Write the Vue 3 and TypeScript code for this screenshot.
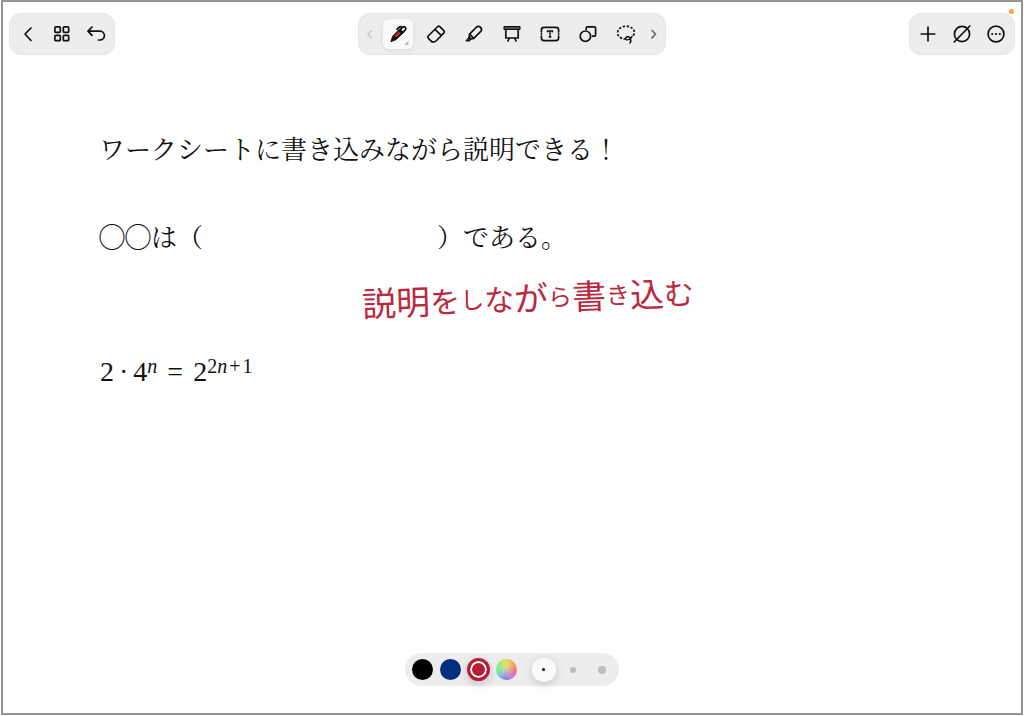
<script setup lang="ts">
import { ref } from 'vue'

interface Ink {
  char: string
  size: 'large' | 'medium' | 'small'
}

const tools = ['pen', 'eraser', 'highlighter', 'board', 'text', 'shape', 'lasso']
const toolNames: Record<string, string> = {
  pen: 'ペン',
  eraser: '消しゴム',
  highlighter: 'マーカー',
  board: 'ボード',
  text: 'テキスト',
  shape: '図形',
  lasso: 'なげなわ',
}
const colors = ['black', 'navy', 'crimson', 'rainbow']
const widths = ['thin', 'regular', 'thick']

const tool = ref('pen')
const color = ref('crimson')
const width = ref('thin')

const ink: Ink[] = [
  { char: '説', size: 'large' },
  { char: '明', size: 'large' },
  { char: 'を', size: 'medium' },
  { char: 'し', size: 'small' },
  { char: 'な', size: 'medium' },
  { char: 'が', size: 'large' },
  { char: 'ら', size: 'small' },
  { char: '書', size: 'large' },
  { char: 'き', size: 'small' },
  { char: '込', size: 'large' },
  { char: 'む', size: 'medium' },
]

const blank = '\u3000'.repeat(9)
</script>

<template>
  <div class="screen">
    <div class="frame">
      <span class="recording"></span>
      <header class="bars">
        <nav class="bar side">
          <button type="button" aria-label="戻る">
            <svg viewBox="0 0 24 24"><path d="M15 6 L9 12 L15 18.5" /></svg>
          </button>
          <button type="button" aria-label="一覧">
            <svg viewBox="0 0 24 24">
              <rect x="4.9" y="4.9" width="5.4" height="5.4" rx="1" />
              <rect x="13.3" y="4.9" width="5.4" height="5.4" rx="1" />
              <rect x="4.9" y="13.3" width="5.4" height="5.4" rx="1" />
              <rect x="13.3" y="13.3" width="5.4" height="5.4" rx="1" />
            </svg>
          </button>
          <button type="button" aria-label="取り消す">
            <svg viewBox="0 0 24 24">
              <path d="M8 5 L4 9.2 L8 13.4 M4 9.2 H16 A4.4 4.4 0 0 1 16 18 H14.4" />
            </svg>
          </button>
        </nav>

        <div class="bar tools">
          <button type="button" class="arrow faded" aria-label="前のツール">
            <svg viewBox="0 0 24 24"><path d="M14.5 8.5 L11 12 L14.5 16" /></svg>
          </button>
          <button
            v-for="name in tools"
            :key="name"
            type="button"
            class="tool"
            :class="{ active: tool === name }"
            :aria-label="toolNames[name]"
            :aria-pressed="tool === name"
            @click="tool = name"
          >
            <svg v-if="name === 'pen'" viewBox="0 0 24 24">
              <path class="solid" d="M5 19.4 L6.8 14 L15.2 5.4 Q17.8 3.4 19.8 5 Q21 6.8 19 9.2 L10.2 17.4 Z" />
              <path class="red" d="M9.4 14.6 L13.6 10.2" />
              <path class="shine" d="M16.6 8 L18 6.6" />
              <path d="M15 4.6 Q13.8 4.4 12.8 5.4 L11 7.4" />
              <path class="mark" d="M22.5 18.5 V23 H18 Z" />
            </svg>
            <svg v-else-if="name === 'eraser'" viewBox="0 0 24 24">
              <path d="M4.2 14 L13.8 4.5 Q14.8 3.6 15.8 4.6 L20 8.8 Q20.8 9.8 20 10.8 L12 19 Q11.2 19.8 10 19.8 H8 L4.3 16.3 Q3.3 15.2 4.2 14 Z M11 7.4 L17.2 13.4" />
            </svg>
            <svg v-else-if="name === 'highlighter'" viewBox="0 0 24 24">
              <path d="M7.6 12.2 L14.6 5 Q16.6 3.6 18.6 5.4 Q20.4 7.6 18.8 9.4 L11.8 16.4 Z M7.6 12.2 L7.2 15 L9.2 17 L11.8 16.4" />
              <path class="solid" d="M7 15.4 L9 17.2 L7.6 19 H4.2 Z" />
            </svg>
            <svg v-else-if="name === 'board'" viewBox="0 0 24 24">
              <rect class="roof" x="4" y="4.6" width="16" height="2.8" rx="0.6" />
              <path d="M5.8 7.4 V16 H18.2 V7.4 M9.2 16 L8 19 M14.8 16 L16 19" />
            </svg>
            <svg v-else-if="name === 'text'" viewBox="0 0 24 24">
              <path d="M3.4 10 V8 Q3.4 5.4 6 5.4 H18 Q20.6 5.4 20.6 8 V10 M3.4 14 V16 Q3.4 18.6 6 18.6 H18 Q20.6 18.6 20.6 16 V14 M3.4 11.9 V12.1 M20.6 11.9 V12.1" />
              <path class="fine" d="M9.4 9.8 V9 H14.6 V9.8 M12 9 V15 M11.2 15 H12.8" />
            </svg>
            <svg v-else-if="name === 'shape'" viewBox="0 0 24 24">
              <circle cx="9.4" cy="14.2" r="5.2" />
              <path d="M10.2 7.2 V6 Q10.2 4.8 11.4 4.8 H18.4 Q19.6 4.8 19.6 6 V13 Q19.6 14.2 18.4 14.2 H16.6" />
            </svg>
            <svg v-else viewBox="0 0 24 24">
              <path class="dashed" d="M12 17 C7 17 3.6 14.5 3.6 11 C3.6 7 7.4 4.2 12 4.2 C16.8 4.2 20.4 7 20.4 10.6 C20.4 12 19.6 13.4 18.4 14.4" />
              <path class="fine" d="M18 14.4 C16.5 17.8 12 19 11.6 16.8 C11.4 14.4 15.2 14 16.4 16 C17.2 17.6 17.4 19 16 21" />
            </svg>
          </button>
          <button type="button" class="arrow" aria-label="次のツール">
            <svg viewBox="0 0 24 24"><path d="M9 8.5 L12.5 12 L9 16" /></svg>
          </button>
        </div>

        <nav class="bar side end">
          <button type="button" aria-label="追加">
            <svg viewBox="0 0 24 24"><path d="M5.2 12 H18.8 M12 5.2 V18.8" /></svg>
          </button>
          <button type="button" aria-label="表示切り替え">
            <svg viewBox="0 0 24 24">
              <circle cx="12" cy="12" r="7.6" />
              <path d="M4.2 20 L19.8 4" />
            </svg>
          </button>
          <button type="button" aria-label="その他">
            <svg viewBox="0 0 24 24">
              <circle cx="12" cy="12" r="7.9" />
              <circle class="dot" cx="8.2" cy="12" r="1.1" />
              <circle class="dot" cx="12" cy="12" r="1.1" />
              <circle class="dot" cx="15.8" cy="12" r="1.1" />
            </svg>
          </button>
        </nav>
      </header>

      <main class="sheet">
        <p>ワークシートに書き込みながら説明できる！</p>
        <p class="fill">◯◯は（{{ blank }}）である。</p>
        <p class="ink">
          <span v-for="(letter, i) in ink" :key="i" :class="letter.size">{{ letter.char }}</span>
        </p>
        <p class="formula">
          <span>2</span><span class="op">·</span><span>4<sup><i>n</i></sup></span><span class="eq">=</span><span>2<sup>2<i>n</i><span class="plus">+</span>1</sup></span>
        </p>
      </main>

      <footer class="palette">
        <button
          v-for="name in colors"
          :key="name"
          type="button"
          class="swatch"
          :class="{ chosen: color === name }"
          :aria-label="name"
          :aria-pressed="color === name"
          @click="color = name"
        >
          <span :class="name"></span>
        </button>
        <span class="gap"></span>
        <button
          v-for="name in widths"
          :key="name"
          type="button"
          class="nib"
          :class="{ chosen: width === name }"
          :aria-label="name"
          :aria-pressed="width === name"
          @click="width = name"
        >
          <span><i :class="name"></i></span>
        </button>
      </footer>
    </div>
  </div>
</template>

<style>
body {
  background: #fff;
}
</style>

<style scoped>
* {
  box-sizing: border-box;
}

.screen {
  display: flex;
  min-height: 100vh;
  padding: 0 1px 1px;
  font-family: "Liberation Sans", "Noto Sans CJK JP", sans-serif;
  color: #111;
}

.frame {
  position: relative;
  display: flex;
  flex: 1;
  flex-direction: column;
  border: 2px solid #949494;
  background: #fff;
}

.recording {
  position: absolute;
  top: 7px;
  right: 7px;
  width: 5px;
  height: 5px;
  border-radius: 50%;
  background: #ffa32b;
}

button {
  display: flex;
  align-items: center;
  justify-content: center;
  padding: 0;
  border: 0;
  background: none;
  color: inherit;
}

.bars {
  display: grid;
  grid-template-columns: 1fr auto 1fr;
  padding: 11px 6px 0;
}

.bar {
  display: flex;
  align-items: center;
  height: 42px;
  border: 1px solid #e4e4e4;
  border-radius: 12px;
  background: #ededed;
}

.side {
  justify-self: start;
  padding: 0 1px;
}

.end {
  justify-self: end;
}

.side button {
  width: 34px;
  height: 34px;
}

svg {
  flex: none;
  width: 24px;
  height: 24px;
  overflow: visible;
  fill: none;
  stroke: #111;
  stroke-width: 1.7;
  stroke-linecap: round;
  stroke-linejoin: round;
}

.tool {
  width: 30px;
  height: 30px;
  margin: 0 4px;
  border-radius: 6px;
}

.tool.active {
  background: #fafafa;
  box-shadow: 0 1px 5px rgba(0, 0, 0, 0.08);
}

.arrow {
  width: 20px;
  height: 30px;
}

.arrow svg {
  stroke: #666;
}

.faded svg {
  stroke: #c9c9c9;
}

.solid {
  fill: #111;
  stroke-width: 1;
}

.red {
  stroke: #cf1f3c;
  stroke-width: 2.8;
  stroke-linecap: butt;
}

.shine {
  stroke: #eee;
  stroke-width: 2;
}

.fine {
  stroke-width: 1.4;
}

.mark {
  fill: #bcbcbc;
  stroke: none;
}

.roof {
  fill: #666;
  stroke-width: 1.2;
}

.dashed {
  stroke-dasharray: 2.4 1.6;
  stroke-linecap: butt;
}

.dot {
  fill: #111;
  stroke: none;
}

.sheet {
  flex: 1;
  padding: 73px 24px 0 96px;
}

.sheet p {
  margin: 0;
  font-family: "Noto Serif CJK JP", "Noto Sans CJK JP", serif;
  font-size: 26px;
  font-weight: 400;
  line-height: 40px;
  white-space: pre;
}

.sheet .fill {
  margin-top: 48px;
}

.sheet .ink {
  display: flex;
  align-items: center;
  width: max-content;
  margin: 21px 0 0 263px;
  font-family: "Noto Sans CJK JP", sans-serif;
  color: #b92a40;
  transform: rotate(-2deg);
}

.sheet .large {
  font-size: 34px;
}

.sheet .medium {
  font-size: 30px;
}

.sheet .small {
  font-size: 24px;
}

.sheet .formula {
  display: flex;
  margin: 35px 0 0 1px;
  font-family: "Liberation Serif", serif;
  font-size: 28px;
}

.formula sup {
  font-size: 20px;
  line-height: 0;
  vertical-align: 8px;
}

.plus {
  padding: 0 2px;
}

.op {
  padding: 0 5px;
}

.eq {
  padding: 0 10px;
}

.palette {
  display: flex;
  align-items: center;
  align-self: center;
  height: 33px;
  margin-bottom: 27px;
  padding: 0 3px;
  border-radius: 17px;
  background: #ededed;
}

.swatch {
  width: 28px;
  height: 33px;
}

.swatch span {
  width: 21px;
  height: 21px;
  border-radius: 50%;
}

.swatch .black {
  background: #000;
}

.swatch .navy {
  background: #002f7b;
}

.swatch .crimson {
  background: #b71f35;
}

.swatch .rainbow {
  background:
    radial-gradient(circle, rgba(225, 215, 160, 0.8), transparent 60%),
    conic-gradient(#dce35c, #f0a060 60deg, #f0707c 100deg, #c67ae0 150deg, #8584ee 190deg, #79c4e0 230deg, #78f094 280deg, #b0e868 320deg, #dce35c);
}

.swatch.chosen span {
  width: 23px;
  height: 23px;
  border: 3px solid #b71f35;
  box-shadow: inset 0 0 0 2px #fff, 0 3px 10px rgba(0, 0, 0, 0.18);
}

.gap {
  width: 9px;
}

.nib {
  width: 29px;
  height: 33px;
}

.nib span {
  display: flex;
  align-items: center;
  justify-content: center;
  width: 24px;
  height: 24px;
  border-radius: 50%;
}

.nib.chosen span {
  background: #fafafa;
  box-shadow: 0 3px 10px rgba(0, 0, 0, 0.16);
}

.nib i {
  border-radius: 50%;
  background: #bdbdbd;
}

.nib .thin {
  width: 3px;
  height: 3px;
}

.nib .regular {
  width: 6px;
  height: 6px;
}

.nib .thick {
  width: 8px;
  height: 8px;
}

.nib.chosen i {
  background: #000;
}
</style>
